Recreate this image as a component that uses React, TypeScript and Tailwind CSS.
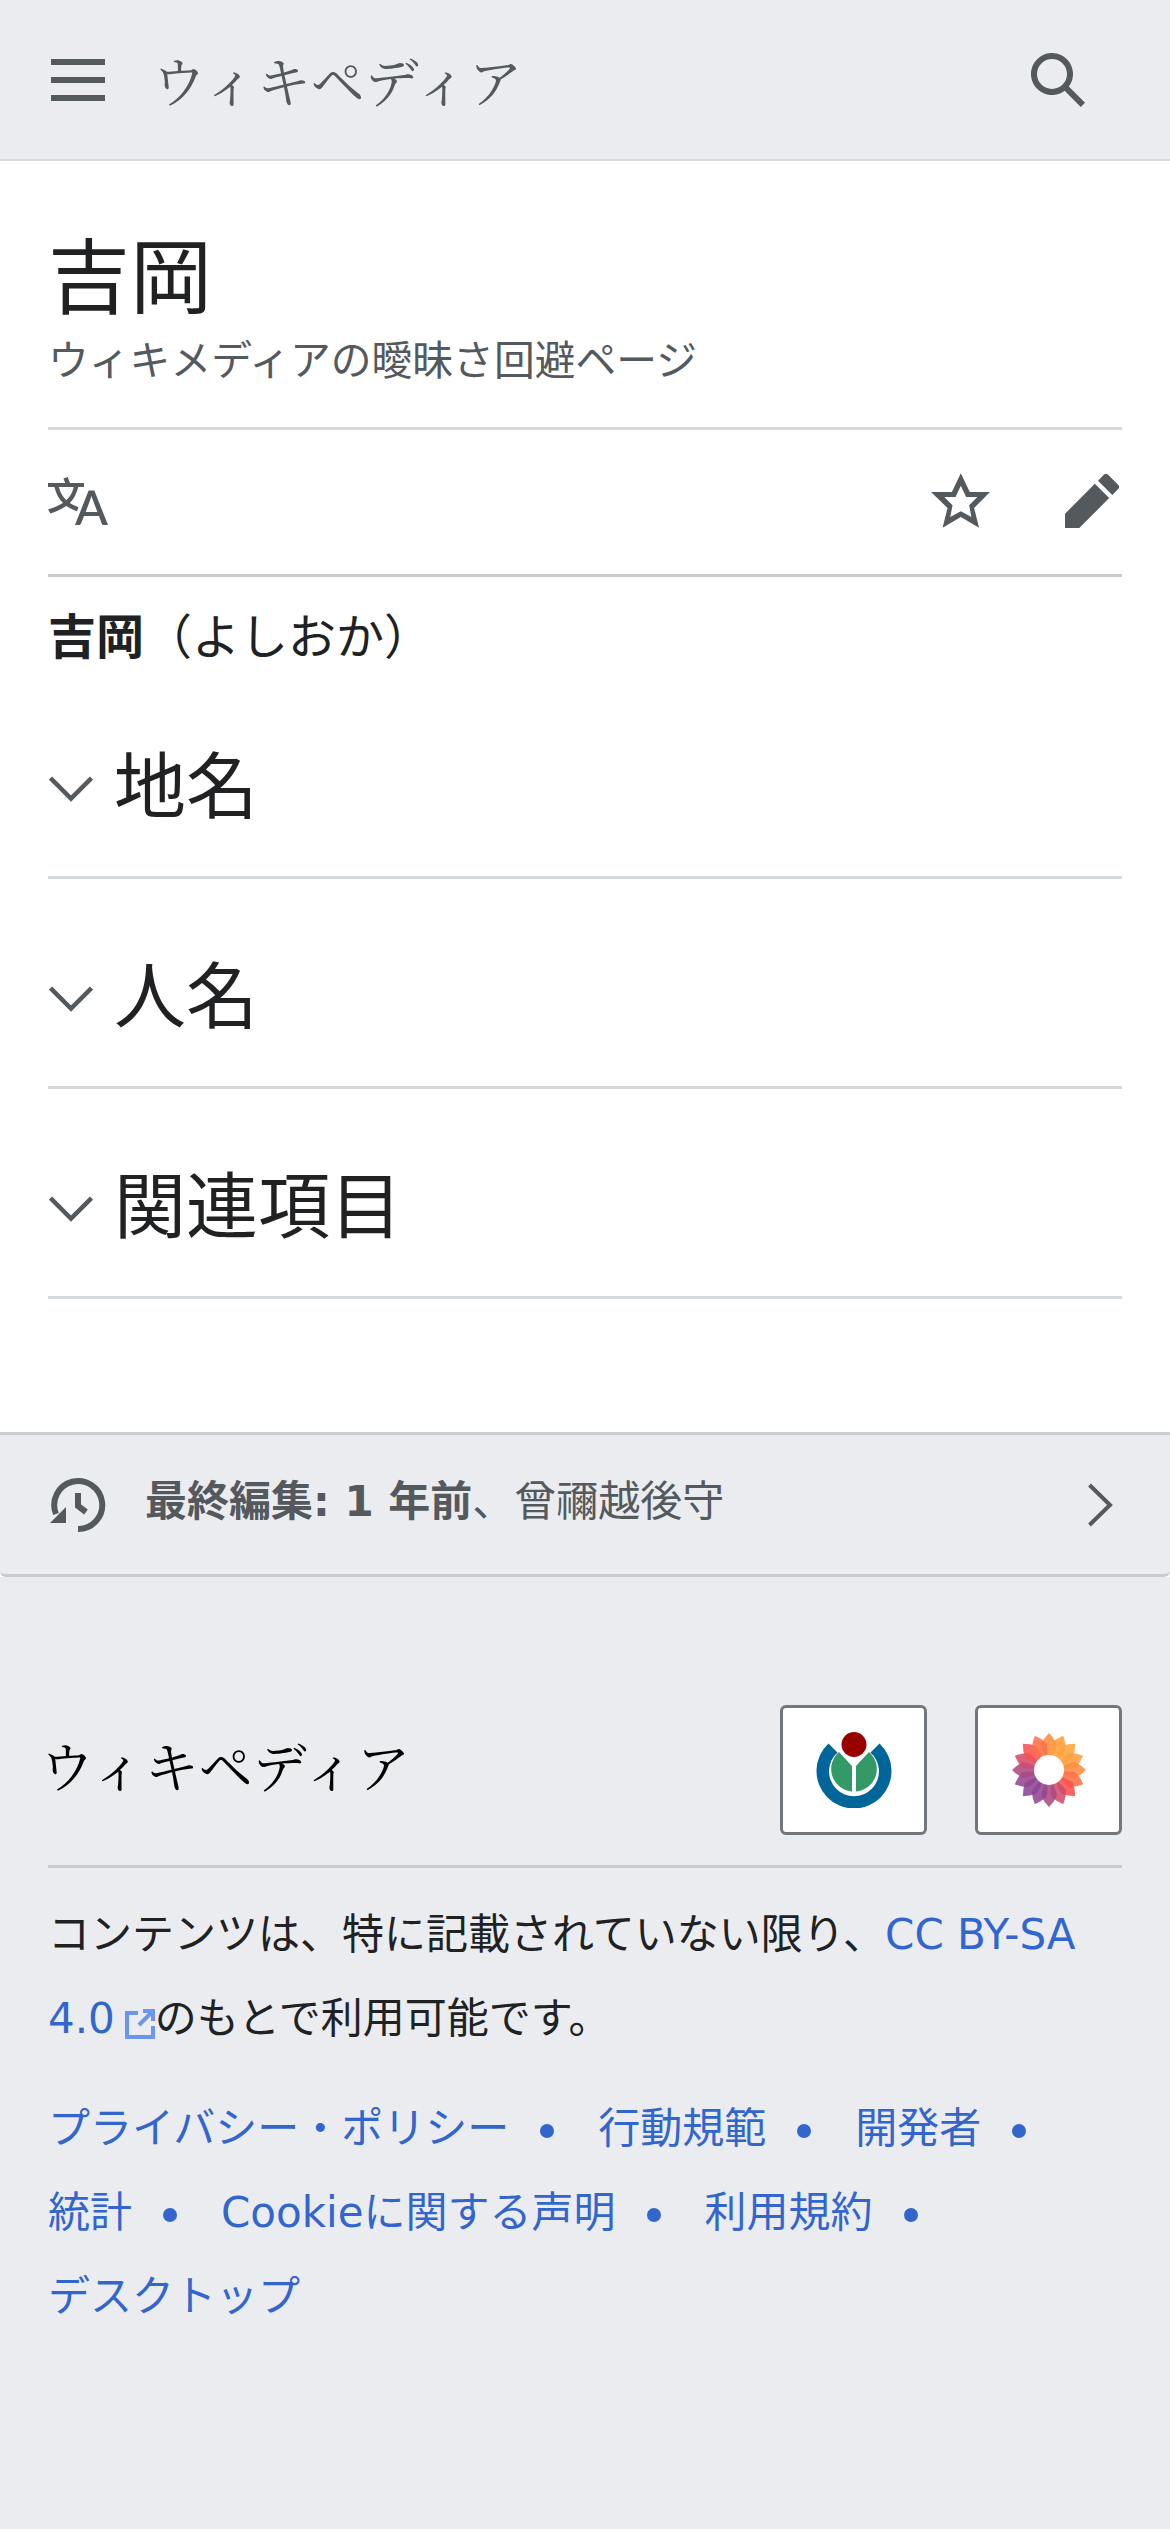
import React from 'react';

const sans = { fontFamily: '"DejaVu Sans", "Noto Sans CJK JP", sans-serif' };

function Icon({ d, className }: { d: string; className: string }) {
  return (
    <svg viewBox="0 0 20 20" className={className} fill="currentColor">
      <path d={d} />
    </svg>
  );
}

function Wordmark({ className }: { className: string }) {
  return (
    <span
      className={className}
      style={{ fontFamily: '"Noto Serif CJK JP", "Noto Sans CJK JP", serif' }}
    >
      ウィキペディア
    </span>
  );
}

function Section({ title }: { title: string }) {
  return (
    <div className="flex items-center h-[210px] border-b-[3px] border-[#d5d8dc] pt-[29px]">
      <svg viewBox="0 0 44 26" className="w-[44px] h-[26px] ml-[1px] mt-[3px] text-[#54595d]" fill="none" stroke="currentColor" strokeWidth="4.5">
        <path d="M1.5 2 22 22.5 42.5 2" />
      </svg>
      <h2 className="ml-[21px] text-[72px] leading-[100px] text-[#202122]">{title}</h2>
    </div>
  );
}

function WikimediaLogo() {
  return (
    <svg viewBox="0 0 76 76" className="w-[76px] h-[76px]">
      <path d="M12.5 11.5A37.5 37.5 0 1 0 63.5 11.5L54.5 20.5A25 25 0 1 1 21.5 20.5Z" fill="#006699" />
      <path d="M23 20A22.5 22.5 0 0 0 36 59.5V34Z" fill="#339966" />
      <path d="M53 20A22.5 22.5 0 0 1 40 59.5V34Z" fill="#339966" />
      <circle cx="38" cy="12.5" r="12.5" fill="#990000" />
    </svg>
  );
}

// mix between the three flower colours, t runs from -1 (bottom left) to 1 (top right)
function petalColor(t: number) {
  const stops = [
    [140, 70, 150],
    [250, 80, 80],
    [255, 165, 60],
  ];
  const [a, b, k] = t < 0 ? [stops[0], stops[1], t + 1] : [stops[1], stops[2], t];
  const mix = a.map((v, i) => Math.round(v + (b[i] - v) * k));
  return `rgb(${mix.join(',')})`;
}

function MediaWikiLogo() {
  const petals = Array.from({ length: 16 }, (_, i) => i * 22.5);
  return (
    <svg viewBox="-38 -38 76 76" className="w-[76px] h-[76px]">
      {petals.map((a) => {
        const r = (a * Math.PI) / 180;
        const t = (Math.sin(r) + Math.cos(r)) / Math.SQRT2;
        return (
          <path
            key={a}
            d="M0 -37 Q5 -32 8 -26 Q7 -18 2 -12 L-2 -12 Q-7 -18 -8 -26 Q-5 -32 0 -37Z"
            fill={petalColor(t)}
            fillOpacity="0.88"
            transform={`rotate(${a})`}
          />
        );
      })}
      <circle r="15" fill="#fff" />
    </svg>
  );
}

function FooterLink({ text, dot = true }: { text: string; dot?: boolean }) {
  return (
    <span className="inline-block text-[#3366cc] whitespace-nowrap">
      {text}
      {dot && <span className="inline-block w-[14px] h-[14px] rounded-full bg-[#3366cc] ml-[31px] mr-[44px] align-[5px]" />}
    </span>
  );
}

export default function App() {
  return (
    <div className="w-[1170px] min-h-[2532px] bg-white" style={sans}>
      <header className="h-[161px] bg-[#eaecf0] border-b-[2px] border-[#d8dade] flex items-center pl-[48px] pr-[82px]">
        <Icon d="M1 3v2h18V3zm0 8h18V9H1zm0 6h18v-2H1z" className="w-[60px] h-[60px] text-[#54595d]" />
        <Wordmark className="ml-[44px] text-[54px] leading-none text-[#54595d]" />
        <Icon
          d="M12.2 13.6a7 7 0 111.4-1.4l5.4 5.4-1.4 1.4zM3 8a5 5 0 1010 0A5 5 0 003 8"
          className="ml-auto w-[60px] h-[60px] text-[#54595d]"
        />
      </header>

      <main className="px-[48px] pt-[68px] h-[1271px]">
        <h1 className="text-[82px] leading-[100px] text-[#202122]">吉岡</h1>
        <div className="mt-[6px] text-[40.8px] leading-[52px] text-[#54595d]">ウィキメディアの曖昧さ回避ページ</div>
        <div className="mt-[40px] h-[150px] border-y-[3px] border-t-[#d5d8dc] border-b-[#c8ccd1] pb-[3px] flex items-center">
          <Icon
            d="M20 18h-1.44a.6.6 0 01-.4-.12.8.8 0 01-.23-.31L17 15h-5l-1 2.54a.8.8 0 01-.22.3.6.6 0 01-.4.14H9l4.55-11.47h1.89zm-3.53-4.31L14.89 9.5a12 12 0 01-.39-1.24q-.09.37-.19.69l-.19.56-1.58 4.19zm-6.3-1.58a13.4 13.4 0 01-2.91-1.41 11.46 11.46 0 002.81-5.37H12V4H7.31a4 4 0 00-.2-.56C6.87 2.79 6.6 2 6.6 2l-1.47.5s.4.89.6 1.5H0v1.33h2.15A11.2 11.2 0 005 10.7a17.2 17.2 0 01-5 2.1q.56.82.87 1.38a23.3 23.3 0 005.22-2.51 15.6 15.6 0 003.56 1.77zM3.63 5.33h4.91a8.1 8.1 0 01-2.45 4.45 9.1 9.1 0 01-2.46-4.45"
            className="w-[60px] h-[60px] text-[#54595d]"
          />
          <svg viewBox="30 40 178 165" className="ml-auto w-[59px] h-[55px] text-[#54595d]" fill="currentColor" fillRule="evenodd">
            <path d="M120 40 147 97H208L160 145 175 205 120 172 65 205 80 145 30 97H93ZM120 78 104 112H70L95 137 88 172 120 155 152 172 145 137 170 112H136Z" />
          </svg>
          <Icon
            d="M16.77 8l1.94-2a1 1 0 000-1.41l-3.34-3.3a1 1 0 00-1.41 0L12 3.23zM1 14.25V19h4.75l9.96-9.96-4.75-4.75z"
            className="ml-[72px] w-[60px] h-[60px] text-[#54595d]"
          />
        </div>
        <p className="mt-[28px] text-[48px] leading-[64px] text-[#202122]">
          <b>吉岡</b>（よしおか）
        </p>
        <Section title="地名" />
        <Section title="人名" />
        <Section title="関連項目" />
      </main>

      <div className="h-[145px] bg-[#eaecf0] border-y-[3px] border-t-[#c8ccd1] border-b-[#c8ccd1] rounded-b-[6px] flex items-center pl-[48px] pr-[55px] text-[42px] text-[#54595d]">
        <svg viewBox="0 0 60 60" className="w-[60px] h-[60px]" fill="none" stroke="currentColor" strokeWidth="6">
          <path d="M30 54A24 24 0 1 0 8 39" />
          <path d="M30 18V31L38 37" />
          <path d="M2 48H18V32Z" fill="currentColor" stroke="none" />
        </svg>
        <span className="ml-[37px] mb-[6px]">
          <b>最終編集: 1 年前</b>、曾禰越後守
        </span>
        <svg viewBox="0 0 26 44" className="ml-auto w-[26px] h-[44px] mr-[2px]" fill="none" stroke="currentColor" strokeWidth="4">
          <path d="M2.5 2 23 22 2.5 42" />
        </svg>
      </div>

      <footer className="h-[952px] bg-[#eaecf0] px-[48px] pt-[128px]">
        <div className="h-[163px] border-b-[3px] border-[#c8ccd1] flex items-start">
          <Wordmark className="mt-[33px] -ml-[8px] text-[54px] leading-none text-black" />
          <div className="ml-auto w-[147px] h-[130px] bg-white border-[3px] border-[#72777d] rounded-[6px] flex items-center justify-center">
            <WikimediaLogo />
          </div>
          <div className="ml-[48px] w-[147px] h-[130px] bg-white border-[3px] border-[#72777d] rounded-[6px] flex items-center justify-center">
            <MediaWikiLogo />
          </div>
        </div>
        <p className="mt-[25px] text-[42px] leading-[84px] text-[#202122]">
          コンテンツは、特に記載されていない限り、<span className="text-[#3366cc]">CC BY-SA 4.0</span>
          <svg viewBox="0 0 30 30" className="inline-block w-[30px] h-[30px] ml-[10px] align-[-6px] text-[#6b96ee]" fill="none" stroke="currentColor" strokeWidth="4">
            <path d="M13 4H2V28H28V17M18 2H28V12M28 2 14 16" />
          </svg>
          のもとで利用可能です。
        </p>
        <p className="mt-[26px] text-[42px] leading-[84px]">
          <FooterLink text="プライバシー・ポリシー" />
          <FooterLink text="行動規範" />
          <FooterLink text="開発者" />
          <FooterLink text="統計" />
          <FooterLink text="Cookieに関する声明" />
          <FooterLink text="利用規約" />
          <FooterLink text="デスクトップ" dot={false} />
        </p>
      </footer>
    </div>
  );
}
